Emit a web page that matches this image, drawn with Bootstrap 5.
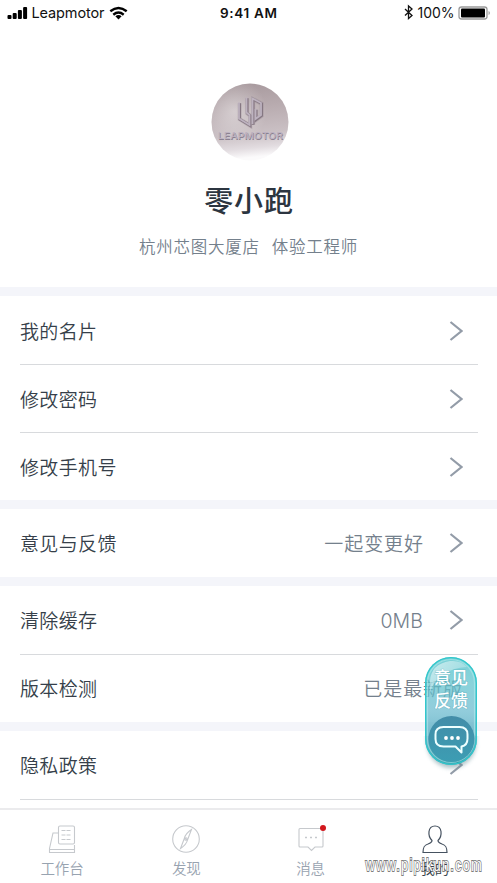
<!DOCTYPE html>
<html lang="zh-CN">
<head>
<meta charset="utf-8">
<meta name="viewport" content="width=device-width, initial-scale=1">
<title>我的</title>
<link href="https://cdn.jsdelivr.net/npm/bootstrap@5.3.0/dist/css/bootstrap.min.css" rel="stylesheet">
<style>
body{font-family:"Noto Sans CJK SC",sans-serif;background:#fff;color:#363f4a;height:883px;overflow:hidden}
svg{display:block;flex:none}
.status{height:26px;font:15px Inter,sans-serif;color:#111;padding:0 7px 0 7px}
.status .time{font-weight:600;letter-spacing:.1px}
.profile{height:261px;padding-top:57px}
.profile svg{position:relative;left:1px}
.profile h1{font-size:29px;font-weight:500;letter-spacing:.9px;line-height:40px;margin:18px 0 0;color:#2c3540;padding-left:1px}
.profile p{font-size:16.5px;font-weight:350;letter-spacing:.76px;line-height:24px;margin:15px 0 0;color:#74808c}
.scroller{height:782px;overflow:hidden}
.band{background:#f4f5fa;padding-top:9px}
.setting{height:68px;background:#fff;padding:1px 34px 0 20px;font-size:19px;font-weight:350;letter-spacing:.35px;position:relative;color:#363f4a}
.setting svg{margin-top:-1px}
.first-group .setting{padding-top:3px}
.setting + .setting::before{content:"";position:absolute;left:20px;right:19px;top:0;height:1px;background:#d8dadd}
.setting.ruled::after{content:"";position:absolute;left:20px;right:19px;bottom:-1px;height:1px;background:#d8dadd}
.setting .value{font-weight:350;color:#74808c;margin-right:25px;letter-spacing:.95px}
.setting .value.latin{font:300 19.5px Inter,"Noto Sans CJK SC",sans-serif;letter-spacing:.1px;margin-right:26px}
.tabs{height:75px;border-top:2px solid #ebebed;background:#fff}
.tab-item{font-size:14.5px;font-weight:350;line-height:20px;color:#98a3b0;padding-top:14px}
.tab-item svg{margin-bottom:4px}
.tab-item.current{color:#363f4a}
.bubble{position:absolute;left:422px;top:652px;z-index:3}
.watermark{position:absolute;left:360px;top:850px;z-index:4}
</style>
</head>
<body>
<header class="status d-flex align-items-center justify-content-between position-relative">
  <div class="d-flex align-items-center">
    <svg width="21" height="12" viewBox="0 0 21 12"><rect x=".5" y="8" width="4" height="4" rx="1"/><rect x="5.7" y="6" width="4" height="6" rx="1"/><rect x="10.9" y="3" width="4" height="9" rx="1"/><rect x="16.1" y="0" width="4" height="12" rx="1"/></svg>
    <svg width="102" height="22"><text x="3.500" y="16" font-size="14.500" textLength="73" fill="#111">Leapmotor</text><g fill="none" stroke="#000" stroke-width="2.400"><path d="M82.300 9.300q8.200-6.600 16.400 0"/><path d="M85.300 12.700q5.200-4.200 10.400 0"/></g><path d="M87.400 14.200q3.100-2.200 6.200 0l-3.100 3.300z"/></svg>
  </div>
  <span class="time position-absolute start-50 translate-middle-x"><svg width="60" height="22"><text x="1" y="16" font-size="13.500" textLength="57" fill="#111">9:41 AM</text></svg></span>
  <svg width="88" height="22" viewBox="0 0 88 22"><path d="M3 7l7 6.500-3.500 3V4L10 7l-7 6.500" fill="none" stroke="#111" stroke-width="1.300"/><text x="15.500" y="16" font-size="14" textLength="37" fill="#111">100%</text><rect x="57" y="5" width="28" height="12" rx="2.500" fill="#fff" stroke="#9b9b9b" stroke-width="1.300"/><rect x="59" y="6.500" width="24" height="9" rx="1"/><path d="M86.500 9v4q1.500-.5 1.500-2t-1.500-2" fill="#aaa"/></svg>
</header>
<div class="scroller">
  <section class="profile text-center">
    <svg class="mx-auto" width="78" height="78" viewBox="0 0 78 78">
      <defs>
        <linearGradient id="av" x1="0" y1="0" x2=".1" y2="1"><stop offset="0" stop-color="#a6989c"/><stop offset=".35" stop-color="#b8abaf"/><stop offset=".7" stop-color="#cac0c4"/><stop offset=".88" stop-color="#e2dce0"/><stop offset="1" stop-color="#fbfafb"/></linearGradient>
        <radialGradient id="gl" cx=".3" cy=".36" r=".42"><stop offset="0" stop-color="#fff" stop-opacity=".4"/><stop offset="1" stop-color="#fff" stop-opacity="0"/></radialGradient>
      </defs>
      <circle cx="39" cy="39" r="38.500" fill="url(#av)"/><circle cx="39" cy="39" r="38.500" fill="url(#gl)"/>
      <g fill="none">
        <path transform="translate(.7 .7)" d="M35.500 14.500v15l3 2.500v10L28 35.500V19.500M41.500 41V15.500l8.500 4.500v12l-5.500 4V26" stroke="#85778250" stroke-width="4"/>
        <path transform="translate(.7 .7)" d="M35.500 14.500v15l3 2.500v10L28 35.500V19.500M41.500 41V15.500l8.500 4.500v12l-5.500 4V26" stroke="#857782" stroke-width="2.600"/>
        <path d="M35.500 14.500v15l3 2.500v10L28 35.500V19.500M41.500 41V15.500l8.500 4.500v12l-5.500 4V26" stroke="#bdb2bf" stroke-width="1.800"/>
      </g>
      <g font-family="Inter" font-size="9.500"><text x="7.500" y="56.800" font-weight="600" textLength="65" lengthAdjust="spacingAndGlyphs" fill="#8b8290" aria-hidden="true">LEAPMOTOR</text>
      <text x="7" y="56" font-weight="500" textLength="65" lengthAdjust="spacingAndGlyphs" fill="#bdb2c1">LEAPMOTOR</text></g>
    </svg>
    <h1>零小跑</h1>
    <p>杭州芯图大厦店<span class="ms-2 ps-1">体验工程师</span></p>
  </section>
  <main>
    <section class="band first-group">
      <div class="setting d-flex align-items-center"><span class="me-auto">我的名片</span><svg width="14" height="20"><path d="M1.500 1l11 9-11 9" fill="none" stroke="#939ca8" stroke-width="2.200"/></svg></div>
      <div class="setting d-flex align-items-center"><span class="me-auto">修改密码</span><svg width="14" height="20"><path d="M1.500 1l11 9-11 9" fill="none" stroke="#939ca8" stroke-width="2.200"/></svg></div>
      <div class="setting d-flex align-items-center"><span class="me-auto">修改手机号</span><svg width="14" height="20"><path d="M1.500 1l11 9-11 9" fill="none" stroke="#939ca8" stroke-width="2.200"/></svg></div>
    </section>
    <section class="band">
      <div class="setting d-flex align-items-center"><span class="me-auto">意见与反馈</span><span class="value">一起变更好</span><svg width="14" height="20"><path d="M1.500 1l11 9-11 9" fill="none" stroke="#939ca8" stroke-width="2.200"/></svg></div>
    </section>
    <section class="band">
      <div class="setting d-flex align-items-center"><span class="me-auto">清除缓存</span><span class="value latin">0MB</span><svg width="14" height="20"><path d="M1.500 1l11 9-11 9" fill="none" stroke="#939ca8" stroke-width="2.200"/></svg></div>
      <div class="setting d-flex align-items-center"><span class="me-auto">版本检测</span><span class="value me-0">已是最新版</span></div>
    </section>
    <section class="band">
      <div class="setting ruled d-flex align-items-center"><span class="me-auto">隐私政策</span><svg width="14" height="20"><path d="M1.500 1l11 9-11 9" fill="none" stroke="#939ca8" stroke-width="2.200"/></svg></div>
      <div class="bg-white pt-3"></div>
    </section>
  </main>
</div>
<nav class="tabs row g-0 text-center">
  <div class="tab-item col-3"><svg class="mx-auto" width="30" height="30" viewBox="0 0 30 30" fill="none" stroke="#c6c9cd" stroke-width="1.100"><path d="M11.500 9H6L2.500 24.500v4h25V21M2.500 25.500h25"/><rect x="11.500" y="2" width="16" height="18" rx="1.500"/><path d="M14.500 6.500h10M14.500 11h10M14.500 15.500h10" stroke-dasharray="4 1"/></svg>工作台</div>
  <div class="tab-item col-3"><svg class="mx-auto" width="30" height="30" viewBox="0 0 30 30" fill="none" stroke="#c6c9cd" stroke-width="1.100"><circle cx="15" cy="15" r="13.300"/><path d="M20.500 5.500q-6 4-7 8.500L9.500 24.500q6-4 7-8.500zM13 14l4 2"/><circle cx="15" cy="15" r="1.300"/></svg>发现</div>
  <div class="tab-item col-3"><svg class="mx-auto" width="30" height="30" viewBox="0 0 30 30" fill="none" stroke="#c6c9cd" stroke-width="1.100"><path d="M4 4.500h22q1 0 1 1V22q0 1-1 1h-7l-3.500 3.500L12 23H4q-1 0-1-1V5.500q0-1 1-1z"/><path d="M9 13.500h2M14 13.500h2M19 13.500h2" stroke-width="1.300"/><circle cx="27" cy="4" r="3" fill="#d2171d" stroke="none"/></svg>消息</div>
  <div class="tab-item current col-3"><svg class="mx-auto" width="30" height="30" viewBox="0 0 30 30" fill="none" stroke="#465260" stroke-width="1.200"><path d="M12 16.500c-2.500-2.500-3.500-5-3-9C9.500 4 12 2 15 2s5.500 2 6 5.500c.5 4-.5 6.500-3 9 0 2 1 2.500 4 3.500 4 1.200 5 3.500 5 8.500H3c0-5 1-7.300 5-8.500 3-1 4-1.500 4-3.500z"/></svg>我的</div>
</nav>
<svg class="bubble" width="60" height="124" viewBox="0 0 60 124">
  <defs>
    <linearGradient id="pill" x1="0" y1="0" x2="0" y2="1"><stop offset="0" stop-color="#45bec6"/><stop offset=".25" stop-color="#5dc2cd"/><stop offset=".5" stop-color="#68b9ce"/><stop offset=".8" stop-color="#3a9db5"/><stop offset="1" stop-color="#159aaa"/></linearGradient>
    <linearGradient id="disc" x1="0" y1="0" x2="0" y2="1"><stop offset="0" stop-color="#438da8"/><stop offset="1" stop-color="#3c9db3"/></linearGradient>
    <linearGradient id="shine" x1="0" y1="0" x2="1" y2="1"><stop offset="0" stop-color="#fff" stop-opacity=".6"/><stop offset="1" stop-color="#fff" stop-opacity=".05"/></linearGradient>
    <filter id="soft" x="-.3" y="-.2" width="1.600" height="1.400"><feGaussianBlur stdDeviation="2"/></filter>
    <clipPath id="low"><rect x="0" y="84" width="60" height="40"/></clipPath>
  </defs>
  <rect x="5" y="8" width="49" height="108" rx="24.500" fill="#5d8792" opacity=".5" filter="url(#soft)" clip-path="url(#low)"/>
  <rect x="3" y="5" width="52" height="108" rx="26" fill="url(#pill)" fill-opacity=".72"/>
  <rect x="3.700" y="5.700" width="50.600" height="106.600" rx="25.300" fill="none" stroke="#2ec8cc" stroke-width="1.300"/>
  <rect x="5.500" y="7.500" width="47" height="103" rx="23.500" fill="none" stroke="#b9f4f2" stroke-width="1.200" opacity=".5"/>
  <path d="M8 40V29Q9 12 28 9q11-1 17 6Q16 17 8 40z" fill="url(#shine)"/>
  <circle cx="29.500" cy="87" r="23" fill="url(#disc)"/>
  <g font-family="Noto Sans CJK SC, sans-serif" font-size="17" font-weight="500" fill="#fff" stroke="#4b9dad" stroke-opacity=".35" stroke-width="1.200" paint-order="stroke"><text x="12" y="32">意见</text><text x="12" y="55">反馈</text></g>
  <path d="M21.500 75h16q8 0 8 7.500v4q0 7-6 8v6l-6-6h-12q-8 0-8-7.500v-4.500q0-7.500 8-7.500z" fill="none" stroke="#edffff" stroke-width="2" stroke-linejoin="round"/>
  <g fill="#fff"><circle cx="24" cy="86" r="1.900"/><circle cx="30" cy="86" r="1.900"/><circle cx="36" cy="86" r="1.900"/></g>
</svg>
<svg class="watermark" width="130" height="32"><text transform="translate(5.500 20.500) scale(.68 1)" font-family="Liberation Sans, sans-serif" font-size="19" textLength="171" fill="#fff" stroke="#555" stroke-width="1.900" stroke-opacity=".75" paint-order="stroke">www.pipikun.com</text></svg>
<script src="https://cdn.jsdelivr.net/npm/bootstrap@5.3.0/dist/js/bootstrap.bundle.min.js"></script>
</body>
</html>
